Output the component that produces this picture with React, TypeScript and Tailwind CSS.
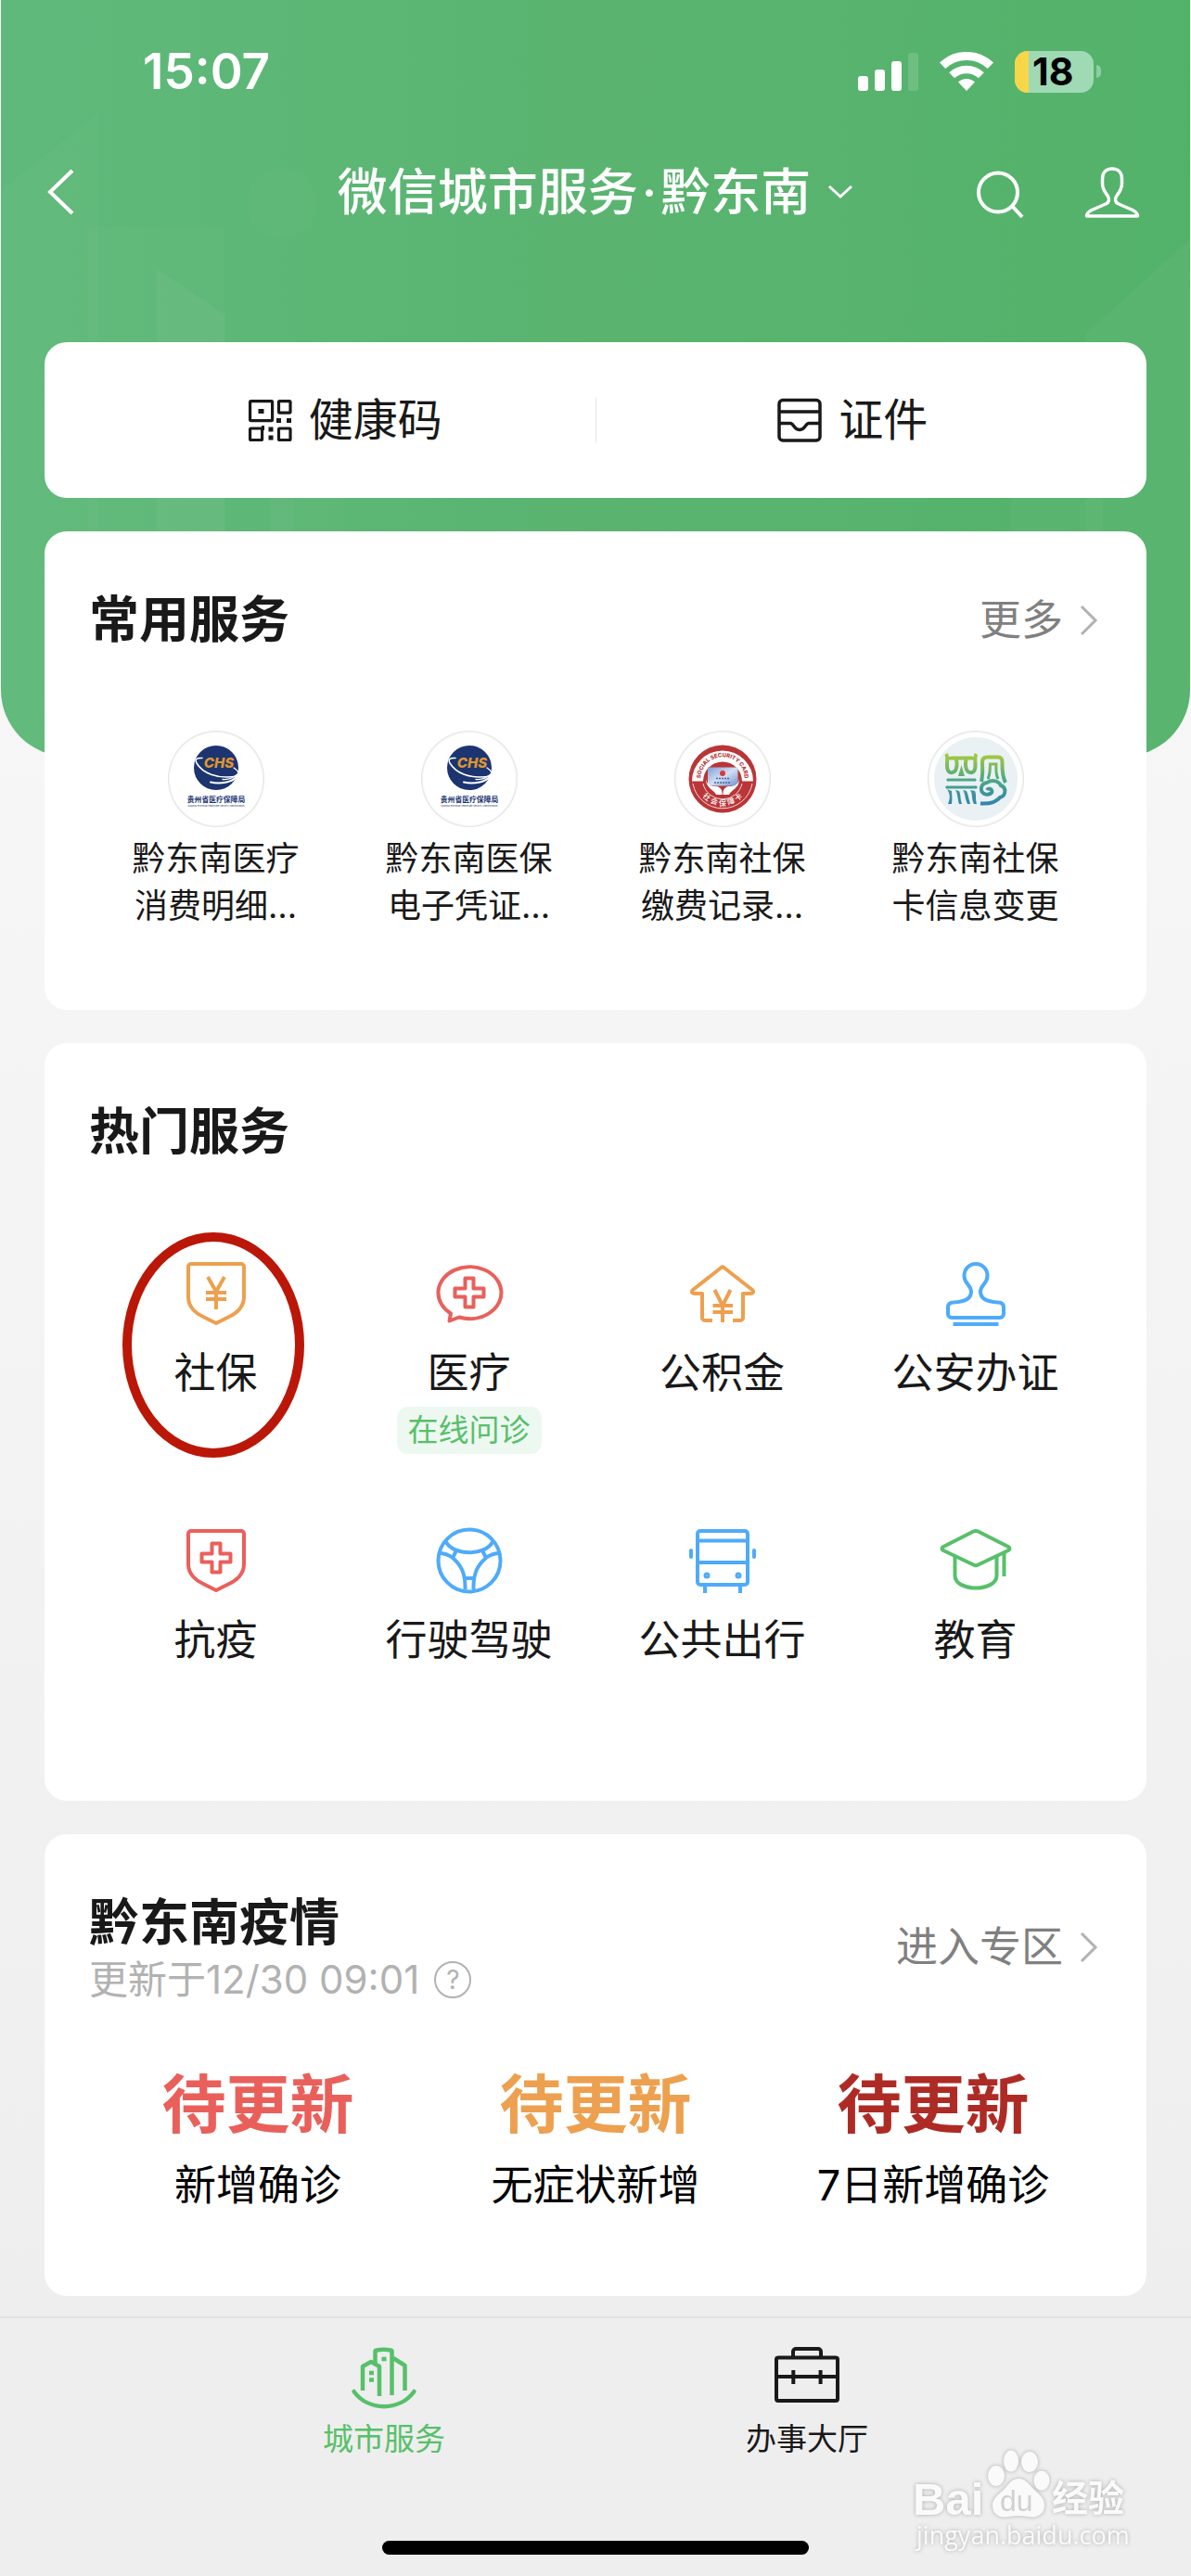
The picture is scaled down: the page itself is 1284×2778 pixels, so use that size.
import type { ReactNode } from 'react';

type IconProps = { children: ReactNode; className: string };

function ServiceIcon({ children, className }: IconProps) {
  return (
    <svg
      viewBox="0 0 84 84"
      className={className}
      width="84"
      height="84"
      fill="none"
      stroke="currentColor"
      strokeWidth="4"
      strokeLinejoin="round"
      aria-hidden="true"
    >
      {children}
    </svg>
  );
}

const SHIELD = 'M15 10H69a3 3 0 0 1 3 3V46C72 57 63 64 56 67L42 74L28 67C21 64 12 57 12 46V13a3 3 0 0 1 3-3Z';

const ChevronRight = () => (
  <svg viewBox="0 0 20 34" className="h-[34px] w-5" fill="none" stroke="#b2b2b2" strokeWidth="3" aria-hidden="true">
    <path d="M2 2L17 17L2 32" />
  </svg>
);

const HealthcareLogo = () => (
  <svg viewBox="0 0 104 104" className="h-full w-full" aria-hidden="true">
    <circle cx="52" cy="40" r="24" fill="#1c3570" />
    <g fill="none" stroke="#fff" strokeLinecap="round">
      <path d="M37 29.5C31 29 29 31 31 35C37 45 52 53 75 49" strokeWidth="1.5" />
      <path d="M46 55.5C56 58 69 56 75 49" strokeWidth="2" />
      <path d="M59 52.5C65 53 71 51 76 46C76 44 74 42 71 40" strokeWidth="1.3" />
    </g>
    <text x="55" y="40" textAnchor="middle" fontSize="15" fontWeight="800" fontStyle="italic" fill="#e0962f">
      CHS
    </text>
    <text x="52" y="76.5" textAnchor="middle" fontSize="7.8" fontWeight="700" fill="#1c3570">
      贵州省医疗保障局
    </text>
    <text x="52" y="82" textAnchor="middle" fontSize="2.4" fill="#1c3570">
      Guizhou Provincial Healthcare Security Administration
    </text>
  </svg>
);

const SocialCardLogo = () => (
  <svg viewBox="0 0 104 104" className="h-full w-full" aria-hidden="true">
    <defs>
      <path id="seal-top" d="M29.7 60A23.7 23.7 0 1 1 74.3 60" />
      <path id="seal-bottom" d="M22.5 56A30 30 0 0 0 81.5 56" />
      <linearGradient id="seal-card" x1="0" y1="0" x2="1" y2="1">
        <stop offset="0" stopColor="#7f9fd6" />
        <stop offset="0.5" stopColor="#d3dff3" />
        <stop offset="1" stopColor="#6f93d2" />
      </linearGradient>
    </defs>
    <circle cx="52" cy="52" r="36.5" fill="#b93537" />
    <path d="M19 54.5A33 33 0 1 1 85 54.5H73A21 21 0 1 0 31 54.5Z" fill="#fff" />
    <path d="M20 57A32.5 32.5 0 0 0 84 57M31 57A21.5 21.5 0 0 0 73 57" fill="none" stroke="#fff" strokeWidth="0.8" />
    <rect x="36" y="39.5" width="32.5" height="20" fill="url(#seal-card)" />
    <circle cx="52" cy="46" r="3" fill="#d63b3b" />
    <path d="M45 51.5h14M43 56h18" stroke="#44659f" strokeWidth="1.4" strokeDasharray="2 1" />
    <path
      d="M34 52C35 58 39 60 44 60C48 60 52 62 51.5 69H45C43 64 34 62 34 52ZM70 52C69 58 65 60 60 60C56 60 52 62 52.5 69H59C61 64 70 62 70 52Z"
      fill="#fff"
    />
    <text fontSize="6" fontWeight="800" fill="#b93537" textAnchor="middle">
      <textPath href="#seal-top" startOffset="50%">SOCIAL SECURITY CARD</textPath>
    </text>
    <text fontSize="8" fontWeight="500" fill="#fff" textAnchor="middle">
      <textPath href="#seal-bottom" startOffset="50%">社 会 保 障 卡</textPath>
    </text>
  </svg>
);

const QianLogo = () => (
  <svg viewBox="0 0 104 104" className="h-full w-full" aria-hidden="true">
    <defs>
      <linearGradient id="qian" gradientUnits="userSpaceOnUse" x1="0" y1="25" x2="0" y2="79">
        <stop offset="0" stopColor="#a9cb3a" />
        <stop offset="0.5" stopColor="#4fa983" />
        <stop offset="1" stopColor="#3384ac" />
      </linearGradient>
    </defs>
    <circle cx="52" cy="52" r="45" fill="#e9f1f5" />
    <g fill="none" stroke="url(#qian)" strokeWidth="4">
      <path d="M20 25C22 28 21 32 21 37C21 44 24 47 29 44C32 41 32 36 31 31M52.5 25C50.5 28 51.5 32 51.5 37C51.5 44 48.5 47 43.5 44C40.5 41 40.5 36 41.5 31" />
      <path d="M25 28V29.5H48V28" />
      <path d="M21 54L22 53H51L52 54M20 60L21 61H52L53 60" strokeWidth="3" />
      <path d="M58 55C60 46 59 40 59 34C59 30 61 28.5 64 28.5H76C79 28.5 80.5 30 80.5 34C80.5 40 80 48 84 56" />
      <path d="M65 52C68 46 67 40 67.5 36H74C74 42 73 46 76 52" strokeWidth="3" />
      <path d="M57 78.5C66 79 74 77 78 72C85 70 85 61 79 59C76 53 68 53 64 56C57 57 56 65 61 68C66 70 71 67 69 64C68 62 65 62 64 64" />
    </g>
    <path d="M36.5 37L40 49H33Z" fill="url(#qian)" />
    <path
      d="M21 63C24 68 25 72 22 79H26C27 73 26 67 26 65ZM30 64C33 69 32 73 34 79H37C35 73 36 69 34 65ZM38 64C41 69 40 73 43 79H46C44 73 44 69 42 65ZM46 64C49 69 47 73 50 79H53C51 73 53 69 51 65Z"
      fill="url(#qian)"
    />
  </svg>
);

const commonServices = [
  { lines: ['黔东南医疗', '消费明细…'], logo: <HealthcareLogo /> },
  { lines: ['黔东南医保', '电子凭证…'], logo: <HealthcareLogo /> },
  { lines: ['黔东南社保', '缴费记录…'], logo: <SocialCardLogo /> },
  { lines: ['黔东南社保', '卡信息变更'], logo: <QianLogo /> },
];

const hotServices = [
  {
    name: '社保',
    circled: true,
    icon: (
      <ServiceIcon className="text-[#eda04f]">
        <path d={SHIELD} />
        <path d="M33 24L42 40L51 24M42 39V59M31 41H53M31 48H53" />
      </ServiceIcon>
    ),
  },
  {
    name: '医疗',
    tag: '在线问诊',
    icon: (
      <ServiceIcon className="text-[#e9605b]">
        <path d="M22 63.5A34 28 0 1 1 31 67.5L20.5 71.5Z" />
        <path d="M37.5 25.5h9v11h11v9h-11v11h-9v-11h-11v-9h11z" />
      </ServiceIcon>
    ),
  },
  {
    name: '公积金',
    icon: (
      <ServiceIcon className="text-[#eda04f]">
        <path d="M31 71H23a3 3 0 0 1-3-3V42H12C9 42 8 40 10 38L40.5 14Q42 12.5 43.5 14L74 38C76 40 75 42 72 42H64V68a3 3 0 0 1-3 3H53" />
        <path d="M33.5 38L42 55L50.5 38M42 54V73M31.5 55H53M31.5 62H53" />
      </ServiceIcon>
    ),
  },
  {
    name: '公安办证',
    icon: (
      <ServiceIcon className="text-[#4fabfa]">
        <path d="M42 10C49 10 54.5 15.5 54.5 23C54.5 32 47 32 47 40C47 48 55 51 66 51.5C70 51.5 72 53 72 57V64a4 4 0 0 1-4 4H16a4 4 0 0 1-4-4V57C12 53 14 51.5 18 51.5C29 51 37 48 37 40C37 32 29.5 32 29.5 23C29.5 15.5 35 10 42 10Z" />
        <path d="M17.5 75H66.5" />
      </ServiceIcon>
    ),
  },
  {
    name: '抗疫',
    icon: (
      <ServiceIcon className="text-[#e9605b]">
        <path d={SHIELD} />
        <path d="M37.5 23.5h9v11h11v9h-11v11h-9v-11h-11v-9h11z" />
      </ServiceIcon>
    ),
  },
  {
    name: '行驶驾驶',
    icon: (
      <ServiceIcon className="text-[#4fabfa]">
        <circle cx="42" cy="42" r="33.5" />
        <path d="M17 22C25 37 59 37 67 22M9 34C15 34 20 36 24 39C32 46 38 54 37.5 73M75 34C69 34 64 36 60 39C52 46 46 54 46.5 73M27.5 32L24 39M56.5 32L60 39M37 61H47" />
      </ServiceIcon>
    ),
  },
  {
    name: '公共出行',
    icon: (
      <ServiceIcon className="text-[#4fabfa]">
        <rect x="15" y="10" width="54" height="58" rx="3" />
        <path d="M15 20.5H69M15 44H69M23 69V77M61 69V77" />
        <path d="M8 31V38M76 31V38" strokeLinecap="round" />
        <circle cx="25" cy="58" r="1.5" />
        <circle cx="59" cy="58" r="1.5" />
      </ServiceIcon>
    ),
  },
  {
    name: '教育',
    icon: (
      <ServiceIcon className="text-[#57c06a]">
        <path d="M39.5 10.5Q42 9.5 44.5 10.5L77 27Q80 29 77 31L44.5 46.5Q42 48 39.5 46.5L7 31Q4 29 7 27Z" />
        <path d="M19.5 37V58C19.5 76 64.5 76 64.5 58V37M72.5 33V59" />
      </ServiceIcon>
    ),
  },
];

const stats = [
  { value: '待更新', label: '新增确诊', color: 'text-[#e9605b]' },
  { value: '待更新', label: '无症状新增', color: 'text-[#eda04f]' },
  { value: '待更新', label: '7日新增确诊', color: 'text-[#ae2b25]' },
];

function StatusBar() {
  return (
    <div className="flex h-[132px] items-center justify-between pt-[22px] pr-[97px] pl-[154px] text-white">
      <span className="text-[53px] leading-none font-semibold">15:07</span>
      <div className="flex items-center gap-[23px]">
        <svg viewBox="0 0 65 42" className="h-[42px] w-[65px]" fill="currentColor" aria-hidden="true">
          <rect x="0" y="26" width="11" height="16" rx="3" />
          <rect x="18" y="19" width="11" height="23" rx="3" />
          <rect x="36" y="10" width="11" height="32" rx="3" />
          <rect x="54" y="1" width="11" height="41" rx="3" opacity="0.15" />
        </svg>
        <svg viewBox="0 0 58 42" className="h-[42px] w-[58px]" fill="none" stroke="currentColor" aria-hidden="true">
          <path d="M3.1 14.8A37.5 37.5 0 0 1 54.9 14.8" strokeWidth="9" />
          <path d="M13.1 25.3A23 23 0 0 1 44.9 25.3" strokeWidth="8.5" />
          <path d="M20 32.6A13 13 0 0 1 38 32.6L29 42Z" fill="currentColor" stroke="none" />
        </svg>
        <div className="flex items-center gap-[3px]">
          <div className="flex h-[45px] w-[85px] rounded-[14px] bg-[#9fdab5]">
            <span className="w-[15px] rounded-l-[14px] bg-[#f8d648]" />
            <span className="pl-1 text-[41px] leading-[45px] font-bold text-black">18</span>
          </div>
          <span className="h-[14px] w-[5px] rounded-r-full bg-[#8ccfa2]" />
        </div>
      </div>
    </div>
  );
}

function NavBar() {
  return (
    <nav className="grid h-[150px] grid-cols-[1fr_auto_1fr] items-center px-12 text-white">
      <button type="button" aria-label="返回" className="justify-self-start">
        <svg viewBox="0 0 36 52" className="h-[52px] w-9" fill="none" stroke="currentColor" strokeWidth="4">
          <path d="M30 3L6 26L30 49" />
        </svg>
      </button>
      <button type="button" className="flex items-center gap-[18px]">
        <h1 className="pt-[2px] text-[54px] leading-[70px] font-medium">
          微信城市服务<span className="mx-1">·</span>黔东南
        </h1>
        <svg viewBox="0 0 28 16" className="h-4 w-7" fill="none" stroke="currentColor" strokeWidth="3" aria-hidden="true">
          <path d="M2 2L14 13L26 2" />
        </svg>
      </button>
      <div className="flex gap-12 justify-self-end">
        <button type="button" aria-label="搜索">
          <svg viewBox="0 0 72 72" className="h-[72px] w-[72px]" fill="none" stroke="currentColor" strokeWidth="4">
            <circle cx="32" cy="36.5" r="21" />
            <path d="M47 51L58 63" />
          </svg>
        </button>
        <button type="button" aria-label="我的">
          <svg viewBox="0 0 72 72" className="h-[72px] w-[72px]" fill="none" stroke="currentColor" strokeWidth="3.5" strokeLinejoin="round">
            <path d="M35 11C28 11 24.5 15.5 24.5 22V27C24.5 33 27 36 30 40C32.5 43.5 32 47 28 49L13 55.5C9 57.5 7.5 59.5 7.5 62H62.5C62.5 59.5 61 57.5 57 55.5L42 49C38 47 37.5 43.5 40 40C43 36 45.5 33 45.5 27V22C45.5 15.5 42 11 35 11Z" />
          </svg>
        </button>
      </div>
    </nav>
  );
}

// Green panel with the faint skyline, sits behind the header and the first cards
function Backdrop() {
  return (
    <div className="absolute inset-x-px top-0 h-[816px] overflow-hidden rounded-b-[72px] bg-linear-to-r from-[#5fb97a] via-[#5ab470] to-[#53b26a]">
      <svg viewBox="0 0 1284 816" preserveAspectRatio="none" className="h-full w-full" fill="#fff" aria-hidden="true">
        <path d="M105 122V816H0V205Z" fillOpacity="0.02" />
        <path d="M94 245H242V816H94Z" fillOpacity="0.02" />
        <path d="M168 290L242 340V816H168Z" fillOpacity="0.04" />
        <path d="M290 420H316V816H290Z" fillOpacity="0.04" />
        <path d="M316 420H371V816H316Z" fillOpacity="0.02" />
        <circle cx="303" cy="219" r="38" fillOpacity="0.02" />
        <path d="M1284 258L1171 360V816H1284Z" fillOpacity="0.03" />
        <path d="M1091 430H1190V816H1091Z" fillOpacity="0.03" />
      </svg>
    </div>
  );
}

function QuickEntries() {
  return (
    <section className="grid h-[168px] grid-cols-[1fr_1px_1fr] items-center rounded-3xl bg-white text-[48px]">
      <a href="#health-code" className="flex items-center justify-center gap-[18px] pl-[54px]">
        <svg viewBox="0 0 48 48" className="h-12 w-12" fill="none" stroke="currentColor" strokeWidth="3.2" aria-hidden="true">
          <rect x="2.6" y="3.6" width="24" height="21" rx="1" />
          <rect x="33.5" y="3.6" width="12.5" height="12.5" rx="1" />
          <rect x="2.6" y="33" width="13" height="12.5" rx="1" />
          <rect x="33.5" y="33" width="12.5" height="12.5" rx="1" />
          <path d="M11.5 14.5h6M31 24.5h5M42 24.5h5M15 32.5h3M22.5 34h5M22.5 43h5" strokeWidth="5" />
        </svg>
        健康码
      </a>
      <span className="h-12 bg-[#e5e5e5]" />
      <a href="#certificates" className="flex items-center justify-center gap-[18px] pr-10">
        <svg viewBox="0 0 48 48" className="h-12 w-12" fill="none" stroke="currentColor" strokeWidth="3.5" aria-hidden="true">
          <rect x="2" y="2.5" width="44" height="43.5" rx="4" />
          <path d="M2 15H46M2 27.5H14C18 27.5 17.5 34.5 24 34.5C30.5 34.5 30 27.5 34 27.5H46" />
        </svg>
        证件
      </a>
    </section>
  );
}

function CommonServices() {
  return (
    <section className="rounded-3xl bg-white px-12 pt-[61px] pb-[86px]">
      <div className="flex items-center justify-between pr-1">
        <h2 className="text-[54px] leading-[70px] font-bold">常用服务</h2>
        <a href="#more" className="flex items-center gap-[18px] text-[45px] leading-[62px] text-[#808080]">
          更多
          <ChevronRight />
        </a>
      </div>
      <ul className="mt-[84px] grid grid-cols-4">
        {commonServices.map((service) => (
          <li key={service.lines.join('')}>
            <a href="#service" className="flex flex-col items-center text-[36px] leading-[51px]">
              <span className="mb-[9px] h-[104px] w-[104px] rounded-full shadow-[inset_0_0_2px_1px_#dcdcdc]">{service.logo}</span>
              {service.lines.map((line) => (
                <span key={line}>{line}</span>
              ))}
            </a>
          </li>
        ))}
      </ul>
    </section>
  );
}

function HotServices() {
  return (
    <section className="rounded-3xl bg-white px-12 pt-[61px] pb-[142px]">
      <h2 className="text-[54px] leading-[70px] font-bold">热门服务</h2>
      <ul className="mt-[97px] grid grid-cols-4 gap-y-[73px]">
        {hotServices.map((service) => (
          <li key={service.name}>
            <a href="#service" className="relative flex flex-col items-center">
              {service.icon}
              <span className="mt-[13px] text-[45px] leading-[62px]">{service.name}</span>
              {service.tag && (
                <span className="mt-[5px] rounded-xl bg-[#edf8f1] px-3 text-[33px] leading-[51px] text-[#57c06a]">
                  {service.tag}
                </span>
              )}
              {service.circled && (
                <span className="absolute -top-6 left-9 h-[243px] w-[196px] rounded-[50%] border-[10px] border-[#ba1708]" />
              )}
            </a>
          </li>
        ))}
      </ul>
    </section>
  );
}

function EpidemicCard() {
  return (
    <section className="rounded-3xl bg-white px-12 pt-[61px] pb-[88px]">
      <div className="flex items-center justify-between pr-1">
        <div>
          <h2 className="text-[54px] leading-[70px] font-bold">黔东南疫情</h2>
          <p className="flex items-center gap-4 text-[42px] leading-[52px] text-[#b2b2b2]">
            更新于12/30 09:01
            <button
              type="button"
              aria-label="更新说明"
              className="flex h-10 w-10 items-center justify-center rounded-full border-2 border-[#b2b2b2] text-[28px] leading-none"
            >
              ?
            </button>
          </p>
        </div>
        <a href="#epidemic" className="flex items-center gap-[18px] text-[45px] leading-[62px] text-[#808080]">
          进入专区
          <ChevronRight />
        </a>
      </div>
      <dl className="mt-[61px] grid grid-cols-3 text-center">
        {stats.map((stat) => (
          <div key={stat.label} className="flex flex-col-reverse gap-2">
            <dt className="text-[45px] leading-[62px] text-black">{stat.label}</dt>
            <dd className={`text-[69px] leading-[96px] font-bold ${stat.color}`}>{stat.value}</dd>
          </div>
        ))}
      </dl>
    </section>
  );
}

function TabBar() {
  return (
    <footer className="relative border-t-2 border-[#e2e2e2] bg-[#eeeeee] pt-[29px] pb-6">
      <div className="grid grid-cols-2 px-[186px] text-[33px] leading-10">
        <a href="#city" className="flex flex-col items-center gap-[9px] text-[#57c06a]">
          <svg viewBox="0 0 72 72" className="h-[72px] w-[72px]" fill="none" stroke="currentColor" strokeWidth="4.5" strokeLinejoin="round" aria-hidden="true">
            <path d="M3.5 50C19 71.5 53 71.5 68.5 50" strokeLinecap="round" />
            <path d="M13 49V23L22 18L31 23V55" />
            <path d="M26.5 20V7Q26.5 5.5 28 5.5Q36 4 43 5.5Q44.5 5.5 44.5 7V54" />
            <path d="M46 14L58.5 22V49" />
            <path d="M33.5 15h5M20 30h5M20 37.5h5" />
          </svg>
          城市服务
        </a>
        <a href="#hall" className="flex flex-col items-center gap-[9px]">
          <svg viewBox="0 0 72 72" className="h-[72px] w-[72px]" fill="none" stroke="currentColor" strokeWidth="4" aria-hidden="true">
            <rect x="3" y="13.5" width="66" height="46.5" rx="2" />
            <path d="M21 13V7a3 3 0 0 1 3-3H48a3 3 0 0 1 3 3V13M3 34H69M21.3 27V42M50.6 27V42" />
          </svg>
          办事大厅
        </a>
      </div>
      <div className="mx-auto mt-[90px] h-[15px] w-[460px] rounded-full bg-black" />
    </footer>
  );
}

function Watermark() {
  return (
    <svg
      viewBox="0 0 250 118"
      className="pointer-events-none absolute right-[54px] bottom-6 h-[118px] w-[250px] fill-[#fafafa] drop-shadow-[0_0_2px_#aaaaaa]"
      aria-hidden="true"
    >
      <text x="4" y="75" fontSize="49" fontWeight="700" className="font-['Liberation_Sans',sans-serif]">Bai</text>
      <ellipse cx="110" cy="17" rx="8" ry="11.5" />
      <ellipse cx="130" cy="18" rx="9" ry="11" />
      <ellipse cx="94" cy="33" rx="9" ry="11" />
      <ellipse cx="143" cy="38" rx="8.5" ry="10.5" />
      <path d="M118 36C126 36 130 43 136 49C142 54 146 58 146 65C146 75 137 79 128 77C121 75.5 115 75.5 108 77C98 79 90 75 90 65C90 58 95 54 101 49C107 43 110 36 118 36Z" />
      <text x="98" y="71" fontSize="32" className="fill-[#d0d0d0] font-['Liberation_Sans',sans-serif]">du</text>
      <text x="154" y="71" fontSize="39" fontWeight="700">经验</text>
      <text x="8" y="107" fontSize="27" className="font-['Open_Sans',sans-serif]">jingyan.baidu.com</text>
    </svg>
  );
}

export default function App() {
  return (
    <div className="relative flex min-h-screen flex-col bg-linear-to-b from-[#fafafa] to-[#ededed] font-['Inter','Noto_Sans_CJK_SC',sans-serif] text-[#191919]">
      <Backdrop />
      <header className="relative">
        <StatusBar />
        <NavBar />
      </header>
      <main className="relative flex flex-1 flex-col gap-9 px-12 pt-[87px] pb-[22px]">
        <QuickEntries />
        <CommonServices />
        <HotServices />
        <EpidemicCard />
      </main>
      <TabBar />
      <Watermark />
    </div>
  );
}
